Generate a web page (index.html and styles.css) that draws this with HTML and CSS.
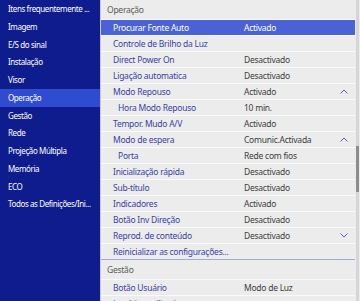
FILE: index.html
```html
<!DOCTYPE html>
<html lang="pt">

<head>
    <meta charset="UTF-8">
    <title>Operação</title>
    <link rel="stylesheet" href="styles.css">
</head>

<body>
    <div class="screen">
        <nav class="menu">
            <div class="menuItem">Itens frequentemente ...</div>
            <div class="menuItem">Imagem</div>
            <div class="menuItem">E/S do sinal</div>
            <div class="menuItem">Instalação</div>
            <div class="menuItem">Visor</div>
            <div class="menuItem active">Operação</div>
            <div class="menuItem">Gestão</div>
            <div class="menuItem">Rede</div>
            <div class="menuItem">Projeção Múltipla</div>
            <div class="menuItem">Memória</div>
            <div class="menuItem">ECO</div>
            <div class="menuItem">Todos as Definições/Ini...</div>
        </nav>
        <main class="panel">
            <div class="list">
                <div class="groupTitle">Operação</div>
                <div class="row selected"><span class="label">Procurar Fonte Auto</span><span class="value">Activado</span></div>
                <div class="row"><span class="label">Controle de Brilho da Luz</span></div>
                <div class="row"><span class="label">Direct Power On</span><span class="value">Desactivado</span></div>
                <div class="row"><span class="label">Ligação automatica</span><span class="value">Desactivado</span></div>
                <div class="row"><span class="label">Modo Repouso</span><span class="value">Activado</span>
                    <svg class="chev" viewBox="0 0 8 5"><path d="M0.5 4.5 L4 1 L7.5 4.5"/></svg></div>
                <div class="row sub"><span class="label">Hora Modo Repouso</span><span class="value">10 min.</span></div>
                <div class="row"><span class="label">Tempor. Mudo A/V</span><span class="value">Activado</span></div>
                <div class="row"><span class="label">Modo de espera</span><span class="value">Comunic.Activada</span>
                    <svg class="chev" viewBox="0 0 8 5"><path d="M0.5 4.5 L4 1 L7.5 4.5"/></svg></div>
                <div class="row sub"><span class="label">Porta</span><span class="value">Rede com fios</span></div>
                <div class="row"><span class="label">Inicialização rápida</span><span class="value">Desactivado</span></div>
                <div class="row"><span class="label">Sub-título</span><span class="value">Desactivado</span></div>
                <div class="row"><span class="label">Indicadores</span><span class="value">Activado</span></div>
                <div class="row"><span class="label">Botão Inv Direção</span><span class="value">Desactivado</span></div>
                <div class="row"><span class="label">Reprod. de conteúdo</span><span class="value">Desactivado</span>
                    <svg class="chev" viewBox="0 0 8 5"><path d="M0.5 0.5 L4 4 L7.5 0.5"/></svg></div>
                <div class="row last"><span class="label">Reinicializar as configurações...</span></div>
                <div class="groupTitle">Gestão</div>
                <div class="row"><span class="label">Botão Usuário</span><span class="value">Modo de Luz</span></div>
                <div class="row"><span class="label">Logótipo utilizador</span></div>
            </div>
            <div class="scrollbar"><div class="thumb"></div></div>
        </main>
    </div>
</body>

</html>
```

FILE: styles.css
```css
body {
    margin: 0px;
    padding: 0px;
    font-family: "Noto Sans", "Open Sans", sans-serif;
    font-size: 8.5px;
    letter-spacing: -0.25px;
    background-color: #ececec;
}

.screen {
    display: flex;
    width: 360px;
    height: 301px;
    overflow: hidden;
}

.menu {
    width: 100px;
    flex-shrink: 0;
    background-color: #0e1c8d;
    color: #ffffff;
}

.menuItem {
    height: 17.75px;
    line-height: 17.75px;
    padding-left: 8px;
    white-space: nowrap;
    font-size: 8px;
    letter-spacing: -0.4px;
}

.menuItem.active {
    background-color: #2f4bcf;
}

.panel {
    flex: 1;
    display: flex;
    border-left: 1px solid #c9c9d6;
    background-color: #ececec;
}

.list {
    flex: 1;
}

.groupTitle {
    height: 20px;
    line-height: 20px;
    padding-left: 6px;
    color: #5a5a5a;
    border-bottom: 1px solid #f8f8f8;
    box-sizing: border-box;
}

.row {
    display: flex;
    align-items: center;
    height: 16px;
    box-sizing: border-box;
    border-bottom: 1px solid #fafafa;
    padding-left: 12px;
    padding-right: 7px;
    white-space: nowrap;
}

.row.sub {
    padding-left: 17px;
}

.row.last {
    border-bottom: 1px solid #a3aad8;
}

.label {
    width: 131px;
    flex-shrink: 0;
    color: #3a3ea6;
}

.row.sub .label {
    width: 126px;
}

.value {
    flex: 1;
    color: #3c3c3c;
}

.row.selected {
    background-color: #4b62d6;
}

.row.selected .label,
.row.selected .value {
    color: #ffffff;
}

.chev {
    width: 8px;
    height: 5px;
    margin-left: auto;
}

.chev path {
    fill: none;
    stroke: #5060c0;
    stroke-width: 1;
}

.scrollbar {
    width: 3px;
    margin: 0px 1px 0px 1px;
    background-color: #d6d6d6;
    position: relative;
}

.thumb {
    position: absolute;
    left: 0px;
    top: 146px;
    width: 3px;
    height: 46px;
    background-color: #8d8d8d;
}
```
